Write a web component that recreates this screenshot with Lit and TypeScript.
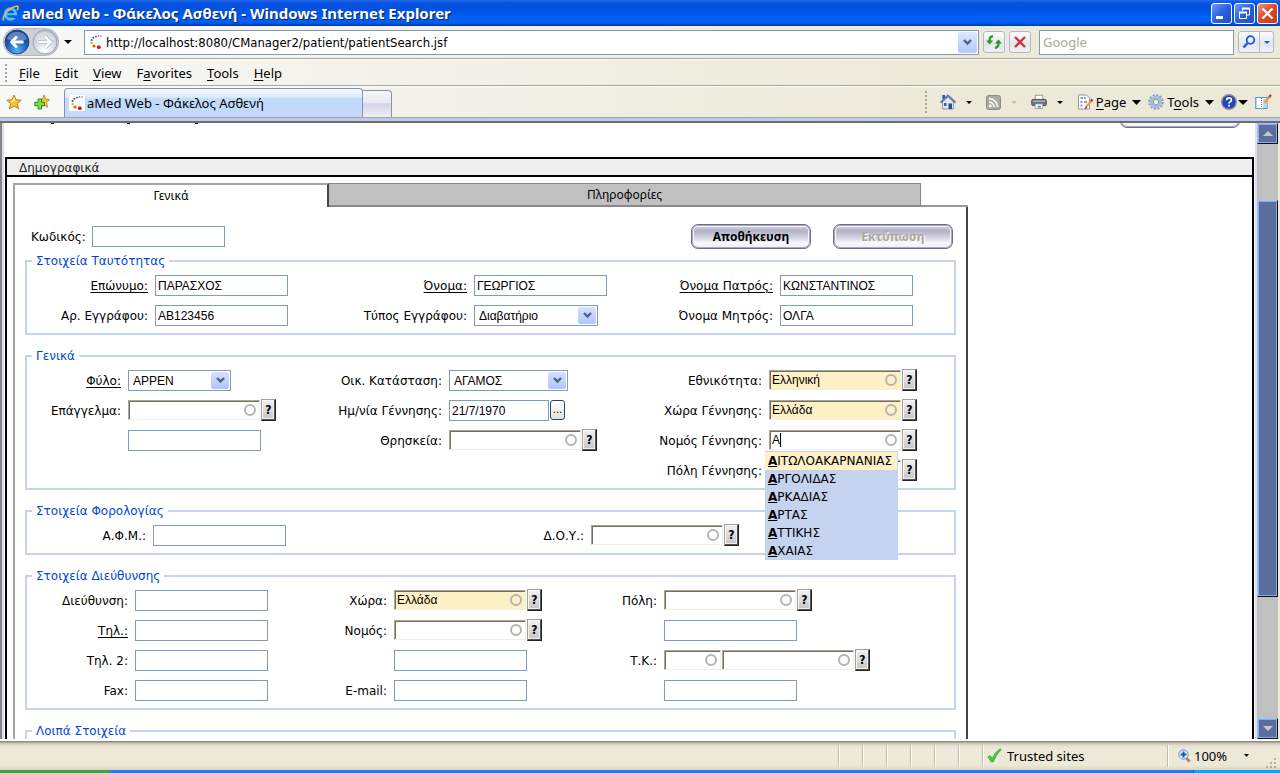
import { LitElement, html, css, svg, nothing, type TemplateResult } from "lit";
import { customElement, property } from "lit/decorators.js";
import { classMap } from "lit/directives/class-map.js";

const caretDown = (w: number, h: number, color = "#000") => html`
  <svg width=${w} height=${h} viewBox="0 0 10 5" preserveAspectRatio="none" aria-hidden="true">
    <path d="M0 0H10L5 5Z" fill=${color} />
  </svg>`;

const favicon = html`
  <svg width="16" height="16" viewBox="0 0 16 16" aria-hidden="true">
    <rect width="16" height="16" fill="#fff" />
    <circle cx="13" cy="2" r=".7" fill="#8a2a7a" /><circle cx="10.5" cy="2" r=".8" fill="#5a3aa0" />
    <circle cx="8" cy="2.6" r=".9" fill="#3a3ab0" /><circle cx="5.4" cy="3.8" r="1" fill="#2255a5" />
    <circle cx="3.6" cy="6" r="1.1" fill="#108060" /><circle cx="3.6" cy="9" r="1.3" fill="#e8b818" />
    <circle cx="6" cy="12" r="1.6" fill="#e06010" /><circle cx="10.8" cy="13.2" r="1.9" fill="#d01818" />
  </svg>`;

const ieLogo = html`
  <svg width="17" height="17" viewBox="0 0 17 17" aria-hidden="true">
    <circle cx="8.5" cy="9" r="5.2" fill="none" stroke="#4cc0f8" stroke-width="3" />
    <path d="M5 9.2H14" stroke="#4cc0f8" stroke-width="2.2" />
    <path d="M10 10.6H15V13H11Z" fill="#0055e0" />
    <path d="M1.6 15.5C-.5 11 9 1 15.5 1.2C16.6 2 16 4 15 5.2" fill="none" stroke="#f4c030" stroke-width="1.5" />
  </svg>`;

const travel = (dir: "back" | "forward") => html`
  <svg width="26" height="26" viewBox="0 0 26 26" aria-hidden="true">
    <defs>
      <radialGradient id="g-${dir}" cx=".5" cy=".85" r=".85">
        <stop offset="0" stop-color=${dir === "back" ? "#4fb4f4" : "#ffffff"} />
        <stop offset=".55" stop-color=${dir === "back" ? "#1c58b8" : "#d4dbe4"} />
        <stop offset="1" stop-color=${dir === "back" ? "#1a3f94" : "#b4becc"} />
      </radialGradient>
    </defs>
    <circle cx="13" cy="13" r="12" fill="url(#g-${dir})" stroke=${dir === "back" ? "#2a4a88" : "#98a3b2"} />
    <path d="M3 10A10.5 10.5 0 0 1 23 10C18 12 8 12 3 10Z" fill="#fff" opacity=".3" />
    <path d=${dir === "back" ? "M19.5 13H8M13 7.5L7.5 13L13 18.5" : "M6.5 13H18M13 7.5L18.5 13L13 18.5"}
      fill="none" stroke=${dir === "back" ? "#fff" : "#a8b2c0"} stroke-width=${dir === "back" ? 3 : 4} stroke-linejoin="round" />
    <path d=${dir === "back" ? "" : "M6.5 13H18M13 7.5L18.5 13L13 18.5"} fill="none" stroke="#fff" stroke-width="2.6" />
  </svg>`;

const refreshIcon = html`
  <svg width="18" height="18" viewBox="0 0 18 18" aria-hidden="true">
    <path d="M4.6 10V6.5Q4.6 3.5 8 3.2" fill="none" stroke="#2f9a1e" stroke-width="2.2" />
    <path d="M1 7.5H8.2L4.6 11.4Z" fill="#2f9a1e" />
    <path d="M13.4 8V11.5Q13.4 14.5 10 14.8" fill="none" stroke="#2f9a1e" stroke-width="2.2" />
    <path d="M9.8 10.4H17L13.4 6.4Z" fill="#2f9a1e" />
  </svg>`;

const stopIcon = html`
  <svg width="14" height="14" viewBox="0 0 14 14" aria-hidden="true">
    <path d="M2 2L12 12M12 2L2 12" stroke="#c83a3a" stroke-width="2.4" />
  </svg>`;

const magnifier = html`
  <svg width="14" height="14" viewBox="0 0 14 14" aria-hidden="true">
    <circle cx="8.5" cy="5" r="3.8" fill="#e8f0ff" stroke="#1c5ae0" stroke-width="1.8" />
    <path d="M5.8 7.8L1.5 12.5" stroke="#1c5ae0" stroke-width="2.4" />
  </svg>`;

const star = svg`<path d="M8 1L10 5.8L15.2 6.2L11.2 9.6L12.6 14.8L8 12L3.4 14.8L4.8 9.6L.8 6.2L6 5.8Z"
  fill="#fbc52c" stroke="#c77a12" />`;

const starIcon = html`<svg width="16" height="16" viewBox="0 0 16 16" aria-hidden="true">${star}
  <path d="M8 3L9.4 6.6L5 9Z" fill="#fff0a0" /></svg>`;

const addStarIcon = html`
  <svg width="16" height="16" viewBox="0 0 16 16" aria-hidden="true">
    <g transform="translate(4 0) scale(.76 .9)">${star}</g>
    <path d="M4 5H7.5V8.3H10.5V11.7H7.5V15H4V11.7H.8V8.3H4Z" fill="#7edc4e" stroke="#2c8a1c" />
  </svg>`;

const homeIcon = html`
  <svg width="16" height="16" viewBox="0 0 16 16" aria-hidden="true">
    <path d="M2.5 8V15H13.5V8L8 3Z" fill="#e4e6ee" stroke="#7a86a8" stroke-width=".8" />
    <path d="M2.5 1H5V5H2.5Z" fill="#2a48b8" />
    <path d="M.5 8.6L8 1.4L15.5 8.6" fill="none" stroke="#5878b0" stroke-width="1.8" />
    <path d="M8.5 9.5H12V15H8.5Z" fill="#1c4f9c" /><path d="M4 9H6.5V12H4Z" fill="#4a5a88" />
  </svg>`;

const feedIcon = html`
  <svg width="15" height="15" viewBox="0 0 15 15" aria-hidden="true">
    <rect x=".5" y=".5" width="14" height="14" rx="2" fill="#aaa9a2" stroke="#8d8c86" />
    <circle cx="4.2" cy="11" r="1.4" fill="#fff" />
    <path d="M3 7A5 5 0 0 1 8 12M3 3.6A8.6 8.6 0 0 1 11.6 12" fill="none" stroke="#fff" stroke-width="1.6" />
  </svg>`;

const printIcon = html`
  <svg width="16" height="16" viewBox="0 0 17 16" aria-hidden="true">
    <path d="M4.5 .8H12.5V6H4.5Z" fill="#fff" stroke="#777" stroke-width=".8" />
    <rect x=".6" y="5.2" width="15.8" height="6.6" rx="1.6" fill="#6e6e72" stroke="#48484c" stroke-width=".8" />
    <rect x="2" y="6.4" width="13" height="1.6" fill="#b0b0b4" />
    <path d="M4.5 10H12.5V15H4.5Z" fill="#fff" stroke="#888" stroke-width=".8" />
    <path d="M7 12H10.5V14H7Z" fill="#28a0a8" />
  </svg>`;

const pageIcon = html`
  <svg width="16" height="16" viewBox="0 0 16 16" aria-hidden="true">
    <path d="M1.5 1H9.5L12.5 4V15H1.5Z" fill="#fcfdff" stroke="#8e97ac" />
    <path d="M3.5 4H6M3.5 8H5.5M3.5 11.5H5.5M7 4H9M7 8H10" stroke="#6478a8" stroke-width="1.4" />
    <path d="M9 13L14.5 6.5" stroke="#e8a23c" stroke-width="2.4" /><path d="M14 7L15.4 5.4" stroke="#c02828" stroke-width="2.4" />
    <path d="M8 14.5L9.8 13" stroke="#444" stroke-width="1.2" />
  </svg>`;

const gearIcon = html`
  <svg width="16" height="16" viewBox="0 0 16 16" aria-hidden="true">
    <circle cx="8" cy="8" r="6.9" fill="none" stroke="#7f9fc0" stroke-width="1.8" stroke-dasharray="2.2 1.4" />
    <circle cx="8" cy="8" r="4.5" fill="none" stroke="#a4bdd8" stroke-width="3.4" />
    <circle cx="8" cy="8" r="2.7" fill="#f2f0e4" stroke="#7090b4" stroke-width=".8" />
  </svg>`;

const helpIcon = html`
  <svg width="16" height="16" viewBox="0 0 16 16" aria-hidden="true">
    <circle cx="8" cy="8" r="7.3" fill="#2346b0" stroke="#8f929e" stroke-width="1.4" />
    <path d="M5.6 6.2Q5.6 3.8 8 3.8T10.4 6Q10.4 7.2 9 7.9Q8 8.4 8 9.6" fill="none" stroke="#fff" stroke-width="1.7" />
    <rect x="7.1" y="10.8" width="1.8" height="1.8" fill="#fff" />
  </svg>`;

const notesIcon = html`
  <svg width="17" height="16" viewBox="0 0 17 16" aria-hidden="true">
    <path d="M.8 3.5H12V14.5H.8Z" fill="#fff" stroke="#4d9ad0" stroke-width="1.2" />
    <path d="M6.5 4V14" stroke="#666" stroke-dasharray="1 1" />
    <path d="M8 5H11.5V14H8Z" fill="#b8dcf0" />
    <path d="M9 9L14.8 2.4" stroke="#e8a23c" stroke-width="2.2" /><path d="M14 3.2L16 .9" stroke="#c04848" stroke-width="2.4" />
  </svg>`;

const checkIcon = html`
  <svg width="15" height="15" viewBox="0 0 15 15" aria-hidden="true">
    <path d="M.8 9L3 7.4L5.2 10.2Q8.4 3.6 13 .8L14.2 1.6Q9.4 6.4 6.2 14H4.4Z" fill="#4ccb3a" stroke="#2e9a28" stroke-width=".6" />
  </svg>`;

const zoomIcon = html`
  <svg width="13" height="14" viewBox="0 0 13 14" aria-hidden="true">
    <path d="M8 8.6L11.6 12.6" stroke="#b07a58" stroke-width="2.6" />
    <circle cx="5.5" cy="5.5" r="4.7" fill="#d8ecff" stroke="#7c93b4" />
    <path d="M5.5 2.6V8.4M2.6 5.5H8.4" stroke="#1456c8" stroke-width="1.9" />
  </svg>`;

/** Text box with an activity ring, a "?" look-up button and an optional suggestion list. */
@customElement("lookup-field")
class LookupField extends LitElement {
  @property() name = "";
  @property() value = "";
  @property() label = "";
  @property({ type: Boolean }) filled = false;
  @property({ type: Boolean }) short = false;
  @property({ type: Boolean }) bare = false;
  @property({ attribute: false }) suggestions: string[] = [];

  static styles = css`
    :host { display: flex; align-items: center; gap: 1px; height: 22px; position: relative; }
    .box { position: relative; flex: 0 1 132px; display: flex; min-width: 0; }
    .box.short { flex-basis: 57px; }
    input {
      box-sizing: border-box; width: 100%; height: 20px; margin: 0; padding: 0 20px 0 2px;
      border: 1px solid; border-color: #aca899 #f1efe2 #f1efe2 #aca899; box-shadow: inset 1px 1px 0 #716f64;
      background: #fff; color: #000; font: 12px/16px "Liberation Sans", Arial, sans-serif; outline: none;
    }
    .filled input { background: #fff1c6; }
    .ring {
      position: absolute; right: 4px; top: 4px; width: 12px; height: 12px; box-sizing: border-box;
      border: 2px solid #b4b4b4; border-radius: 50%;
    }
    .caret { position: absolute; left: 11px; top: 3px; width: 1px; height: 14px; background: #000; }
    button {
      box-sizing: border-box; flex: none; width: 15px; height: 22px; padding: 0; margin: 0;
      border: 1px solid; border-color: #a0a0a0 #222 #222 #a0a0a0;
      box-shadow: inset -1px -1px 0 #555, inset 1px 1px 0 #f8f8f4, inset -2px -2px 0 #f0efe6;
      background: linear-gradient(#f2f2f2, #c4c4c4); color: #000;
      font: bold 12px/18px "DejaVu Sans Condensed", "DejaVu Sans", sans-serif;
    }
    ul {
      position: absolute; z-index: 2; left: -4px; top: 22px; width: 133px; box-sizing: border-box;
      margin: 0; padding: 1px 1px 0 0; list-style: none; background: #c6d3ef;
      font: 12px/18px "DejaVu Sans", Verdana, sans-serif; white-space: nowrap;
    }
    li { padding-left: 3px; height: 18px; }
    li.active { background: #fff1c6; }
    b { text-decoration: underline; }
  `;

  render() {
    return html`
      <span class=${classMap({ box: true, filled: this.filled, short: this.short })}>
        <input type="text" name=${this.name} aria-label=${this.label} .value=${this.value} autocomplete="off" />
        <span class="ring"></span>
        ${this.suggestions.length ? html`<span class="caret"></span>` : nothing}
      </span>
      ${this.bare ? nothing : html`<button type="button" aria-label="${this.label} ?">?</button>`}
      ${this.suggestions.length
        ? html`<ul role="listbox">
            ${this.suggestions.map((s, i) => html`
              <li role="option" class=${classMap({ active: i === 0 })}><b>${s[0]}</b>${s.slice(1)}</li>`)}
          </ul>`
        : nothing}
    `;
  }
}

const prefectures = ["ΑΙΤΩΛΟΑΚΑΡΝΑΝΙΑΣ", "ΑΡΓΟΛΙΔΑΣ", "ΑΡΚΑΔΙΑΣ", "ΑΡΤΑΣ", "ΑΤΤΙΚΗΣ", "ΑΧΑΙΑΣ"];

@customElement("app-root")
class AppRoot extends LitElement {
  static styles = css`
    :host {
      display: flex; flex-direction: column; height: 100vh; overflow: hidden; color: #000;
      background: #ece9d8; font: 13px/16px "Noto Sans", Tahoma, sans-serif;
      --ui: "Noto Sans", Tahoma, sans-serif;
      --form: "DejaVu Sans", Verdana, sans-serif;
    }
    * { box-sizing: border-box; }
    svg { display: block; flex: none; }
    button, input, select { font: inherit; margin: 0; color: inherit; }
    u { text-underline-offset: 2px; }

    .titlebar {
      display: flex; align-items: center; flex: none; height: 26px; padding: 0 2px 0 2px;
      background: linear-gradient(#1c6cf0, #0a50dc 12%, #0054e3 40%, #0064fa 80%, #0050d8 92%, #0034a8);
      color: #fff;
    }
    .titlebar h1 {
      flex: 1; margin: 0 0 0 3px; font: bold 15px/20px var(--ui); white-space: nowrap;
      text-shadow: 1px 1px 1px #0a1f66;
    }
    .wincontrols { display: flex; gap: 2px; }
    .wincontrols button {
      width: 21px; height: 21px; padding: 0; display: grid; place-items: center; border: 1px solid #fff;
      border-radius: 3px; background: linear-gradient(135deg, #6f9bf8, #2a5fe0 50%, #1c4fd0);
    }
    .wincontrols .close { background: linear-gradient(135deg, #f09a80, #d94a28 50%, #c03a18); }

    .bar {
      display: flex; align-items: center; flex: none; border-bottom: 1px solid #a9a592;
      background: linear-gradient(90deg, #f8f8f8, #f3f2ea 30%, #ece9d8 75%);
    }
    .address { height: 33px; padding: 0 6px 0 4px; }
    .travel {
      display: flex; align-items: center; gap: 3px; padding: 0; border: 0;
    }
    .travel .pair { display: flex; gap: 2px; border-radius: 14px; background: #cdd0d4; box-shadow: 0 0 0 1px #b4b8be; }
    .ghost { padding: 0; border: 0; background: none; display: flex; align-items: center; }
    .drop { margin: 0 12px 0 3px; }
    .urlbox {
      flex: 1; display: flex; align-items: center; gap: 2px; height: 25px; min-width: 0; padding: 0 1px 0 3px;
      border: 1px solid #7f9db9; background: #fff;
    }
    .urlbox input {
      flex: 1; min-width: 0; height: 20px; padding: 0; border: 0; background: none; outline: none;
      font: 13px/18px "DejaVu Sans Condensed", "DejaVu Sans", sans-serif;
    }
    .arrowbox {
      width: 19px; height: 21px; padding: 0; display: grid; place-items: center; border: 0; border-radius: 2px;
      background: linear-gradient(#dce7ff, #b4c8f8);
    }
    .sq {
      display: grid; place-items: center; width: 22px; height: 22px; padding: 0; margin-left: 4px;
      border: 1px solid #b4b8c8; border-radius: 3px; background: linear-gradient(#fcfcfe, #e4e6ee 60%, #f0f0f4);
    }
    .search { width: 195px; height: 25px; margin-left: 8px; padding: 0 3px; border: 1px solid #7f9db9; background: #fff; }
    .search::placeholder { color: #aca899; opacity: 1; }
    .go { display: flex; margin-left: 4px; }
    .go .sq { margin: 0; }
    .go .sq:first-child { border-radius: 3px 0 0 3px; }
    .go .sq:last-child { width: 14px; border-left: 0; border-radius: 0 3px 3px 0; }

    .menu { height: 27px; padding-left: 5px; border-top: 1px solid #fff; gap: 12px; }
    .grip { width: 2px; height: 18px; background: repeating-linear-gradient(#a9a592 0 2px, transparent 2px 4px); }
    .menu nav { display: flex; gap: 15px; }
    .menu button { padding: 0; border: 0; background: none; }

    .tabs { height: 32px; padding: 0 8px 0 6px; border-top: 1px solid #fff; }
    .tabs .fav { display: flex; gap: 12px; margin-right: 14px; }
    .pagetab {
      display: flex; align-items: center; gap: 2px; width: 299px; height: 29px; padding: 0 0 0 4px; align-self: flex-end;
      border: 1px solid #8b8fa8; border-bottom: 0; border-radius: 4px 4px 0 0;
      background: linear-gradient(#f4f9ff, #dceafc 30%, #c2dcfa 32%, #c2d8fc);
    }
    .newtab {
      width: 29px; height: 27px; padding: 0; align-self: flex-end; border: 1px solid #8b8fa8; border-left: 0; border-bottom: 0;
      border-radius: 0 4px 0 0; background: linear-gradient(#f6f6fa, #e8e9f2 45%, #d0d4e6 50%, #eef0f6);
    }
    .tools { display: flex; align-items: center; gap: 7px; margin-left: auto; }
    .tools .grip { height: 22px; margin-right: 6px; }
    .tools .small { gap: 10px; margin-right: 7px; }
    .tools .menuish { gap: 6px; }
    .tools .tight { gap: 1px; }
    .tools .word { display: flex; gap: 3px; align-items: center; }
    .strip { flex: none; height: 5px; background: #b9cbf4; border-bottom: 2px solid #716f64; }

    .viewport { flex: 1; min-height: 0; display: flex; background: #fff; border-left: 2px solid #8a877b; }
    .page { flex: 1; min-width: 0; overflow: hidden; border: solid #d8def8; border-width: 0 2px; padding: 0 1px; }
    .above { display: flex; justify-content: space-between; align-items: flex-start; height: 34px; overflow: hidden; padding: 0 14px 0 44px; }
    .above .pill { margin-top: -20px; }

    .pill {
      width: 120px; height: 25px; padding: 0; border: 1px solid #6e6b8c; border-radius: 7px;
      background: linear-gradient(#dcdce8, #b0b0c8 25%, #d4d4e2 55%, #fafafc 80%, #e8e8f0);
      box-shadow: inset 0 0 0 1px #a9a8c0, inset 0 0 0 2px #f4f4fa; font: bold 12px/22px var(--ui);
    }
    .pill:disabled { color: #aca899; text-shadow: 1px 1px 0 #fff; }

    .section { border: 2px solid #000; }
    .section > h2 {
      margin: 0; height: 18px; padding-left: 12px; border-bottom: 2px solid #000; background: #eee;
      font: 12px/18px var(--form); color: #222;
    }
    .demographics { width: 955px; max-width: 100%; margin: 6px 0 0 6px; }
    .pagetabs { display: grid; grid-template-columns: 316fr 592fr 47fr; height: 24px; }
    .pagetabs button { padding: 0; border: 0; font: 12px/20px var(--ui); background: #fff; }
    .pagetabs .on { border: 2px solid #a4a4a4; border-width: 2px 2px 0 2px; border-right-color: #444; }
    .pagetabs .off { border: solid #888; border-width: 1px 1px 2px 0; background: #c0c0c0; }
    .pagetabs .rest { border-bottom: 2px solid #999; }
    .panel { padding: 17px 10px 40px; border: solid #a4a4a4; border-width: 0 2px; border-right-color: #444; }

    form { margin: 0; font: 12px/16px var(--form); }
    .top { display: flex; align-items: center; gap: 22px; padding: 0 3px 0 6px; height: 25px; margin-bottom: 5px; }
    .top .code { display: flex; align-items: center; gap: 6px; margin-right: auto; }
    fieldset { min-width: 0; margin: 0 0 14px; padding: 2px 0 3px; border: 2px solid #c6d3ef; }
    legend { margin-left: 5px; padding: 0 4px; line-height: 14px; color: #0046d5; }
    .grid { display: grid; grid-auto-rows: 30px; }
    .identity { grid-template-columns: 128fr 133fr 186fr 133fr 173fr 174fr; }
    .general { grid-template-columns: 101fr 150fr 171fr 150fr 170fr 185fr; }
    .tax { grid-template-columns: 126fr 133fr 305fr 363fr; }
    .home { grid-template-columns: 108fr 133fr 126fr 150fr 120fr 290fr; }
    .grid > label, .grid > .none { min-width: 0; padding: 8px 7px 0 0; text-align: right; white-space: nowrap; }
    label.req { text-decoration: underline; text-underline-offset: 2px; }
    .cell { display: flex; align-items: flex-start; gap: 1px; min-width: 0; padding-top: 5px; }
    .cell.look { padding-top: 4px; }
    .text {
      width: 133px; min-width: 0; height: 21px; padding: 0 2px; border: 1px solid #7f9db9; background: #fff;
      font: 12px/16px "Liberation Sans", Arial, sans-serif; outline: none;
    }
    .text.date { width: 100px; }
    .pick {
      width: 15px; height: 20px; padding: 0; border: 1px solid #1c4878; border-radius: 3px;
      background: linear-gradient(#fff, #e4e2d8); font: 10px/14px var(--form);
    }
    .select { position: relative; display: flex; }
    select {
      appearance: none; height: 21px; padding: 0 22px 0 4px; border: 1px solid #7f9db9; border-radius: 0; background: #fff;
      font: 12px/16px "Liberation Sans", Arial, sans-serif; outline: none;
    }
    select.sex { width: 103px; } select.doc { width: 124px; } select.marital { width: 119px; }
    .chev {
      position: absolute; right: 2px; top: 2px; width: 18px; height: 17px; display: grid; place-items: center;
      pointer-events: none; border-radius: 2px; background: linear-gradient(#d4e0ff, #b0c6f8);
    }

    .scroll { flex: none; width: 23px; display: flex; flex-direction: column; padding-right: 2px; background: #ece9d8; }
    .scroll button, .thumb {
      padding: 0; border: 1px solid; border-color: #a9c0f8 #111 #111 #a9c0f8; background: #5b6f9f;
      box-shadow: inset -1px -1px 0 #8fa8e8, inset 1px 1px 0 #8fa8e8;
    }
    .scroll button { height: 21px; display: grid; place-items: center; }
    .track { flex: 1; display: grid; grid-template-rows: 56fr 397fr 121fr; background: #c0c0c0; }
    .thumb { grid-row: 2; }

    .status {
      display: flex; align-items: center; flex: none; height: 31px; border-top: 2px solid #fff; padding: 0 2px 0 0;
      background: linear-gradient(#8f8c80 1px, #c8c5b6 2px, #e6e3d4 5px, #ece9d8 8px, #ece9d8 24px, #dad6c2);
    }
    .cells { display: flex; margin-left: auto; }
    .cells span { width: 24px; }
    .cells span, .zone, .zoom { height: 22px; border-left: 1px solid #c0bca8; box-shadow: inset 1px 0 0 #fff; }
    .zone { display: flex; align-items: center; gap: 5px; width: 185px; padding-left: 4px; }
    .zoom { display: flex; align-items: center; width: 99px; padding-left: 10px; }
    .zoom button { gap: 3px; }
    .zoom .arr { margin-left: 17px; }
    .size { align-self: flex-end; width: 12px; height: 12px; }
    .taskbar { display: grid; grid-template-columns: 110px 1fr 87px; flex: none; height: 3px; background: #2f7ae8; }
    .taskbar .start { background: #4a9a48; border-radius: 0 3px 0 0; }
    .taskbar .tray { grid-column: 3; background: #18a0f0; border-left: 1px solid #0a4a98; }
  `;

  private label(text: string, id: string, req = false) {
    return html`<label for=${id} class=${classMap({ req })}>${text}</label>`;
  }

  private text(text: string, id: string, value = "", req = false) {
    return html`
      ${text ? this.label(text, id, req) : html`<span class="none"></span>`}
      <span class="cell"><input class="text" id=${id} type="text" aria-label=${text || id} .value=${value} /></span>`;
  }

  private select(text: string, id: string, value: string, req = false) {
    return html`${this.label(text, id, req)}
      <span class="cell"><span class="select">
        <select id=${id} class=${id}><option>${value}</option></select>
        <span class="chev"><svg width="9" height="7" viewBox="0 0 9 7"><path d="M1 1L4.5 4.5L8 1" fill="none" stroke="#4d6185" stroke-width="2.4" /></svg></span>
      </span></span>`;
  }

  private lookup(text: string, id: string, value = "", suggestions: string[] = []) {
    return html`${this.label(text, id)}
      <span class="cell look"><lookup-field id=${id} name=${id} label=${text} .value=${value}
        ?filled=${value.length > 1} .suggestions=${suggestions}></lookup-field></span>`;
  }

  private blank() {
    return html`<span></span><span></span>`;
  }

  private group(title: string, cls: string, body: TemplateResult) {
    return html`<fieldset><legend>${title}</legend><div class="grid ${cls}">${body}</div></fieldset>`;
  }

  private chrome() {
    return html`
      <header class="titlebar">
        ${ieLogo}
        <h1>aMed Web - Φάκελος Ασθενή - Windows Internet Explorer</h1>
        <div class="wincontrols">
          <button aria-label="Minimize"><svg width="13" height="13"><rect x="1" y="9" width="7" height="3" fill="#fff" /></svg></button>
          <button aria-label="Restore"><svg width="13" height="13"><path d="M4.5 4V1.5H11.5V8H9" fill="none" stroke="#fff" /><path d="M4 1.5H12" stroke="#fff" stroke-width="2" /><path d="M1.5 5.5H8.5V11.5H1.5Z" fill="none" stroke="#fff" /><path d="M1 5.5H9" stroke="#fff" stroke-width="2" /></svg></button>
          <button class="close" aria-label="Close"><svg width="13" height="13"><path d="M1.5 1.5L11.5 11.5M11.5 1.5L1.5 11.5" stroke="#fff" stroke-width="2.2" /></svg></button>
        </div>
      </header>
      <div class="bar address">
        <div class="travel">
          <span class="pair">
            <button class="ghost" aria-label="Back">${travel("back")}</button>
            <button class="ghost" aria-label="Forward">${travel("forward")}</button>
          </span>
          <button class="ghost drop" aria-label="Recent pages">${caretDown(8, 4)}</button>
        </div>
        <div class="urlbox">
          ${favicon}
          <input type="text" aria-label="Address" .value=${"http://localhost:8080/CManager2/patient/patientSearch.jsf"} />
          <button class="arrowbox" aria-label="Show addresses"><svg width="9" height="7" viewBox="0 0 9 7"><path d="M1 1L4.5 4.5L8 1" fill="none" stroke="#4d6185" stroke-width="2.4" /></svg></button>
        </div>
        <button class="sq" aria-label="Refresh">${refreshIcon}</button>
        <button class="sq" aria-label="Stop">${stopIcon}</button>
        <input class="search" type="text" aria-label="Search" placeholder="Google" />
        <span class="go">
          <button class="sq" aria-label="Go">${magnifier}</button>
          <button class="sq" aria-label="Search options">${caretDown(6, 3, "#1c5ae0")}</button>
        </span>
      </div>
      <div class="bar menu">
        <span class="grip"></span>
        <nav>
          <button><u>F</u>ile</button><button><u>E</u>dit</button><button><u>V</u>iew</button>
          <button>F<u>a</u>vorites</button><button><u>T</u>ools</button><button><u>H</u>elp</button>
        </nav>
      </div>
      <div class="bar tabs">
        <span class="fav">
          <button class="ghost" aria-label="Favorites Center">${starIcon}</button>
          <button class="ghost" aria-label="Add to Favorites">${addStarIcon}</button>
        </span>
        <button class="pagetab">${favicon}<span>aMed Web - Φάκελος Ασθενή</span></button>
        <button class="newtab" aria-label="New Tab"></button>
        <div class="tools">
          <span class="grip"></span>
          <button class="ghost small" aria-label="Home">${homeIcon}${caretDown(6, 3)}</button>
          <button class="ghost small" aria-label="Feeds">${feedIcon}${caretDown(6, 3, "#c4c1b0")}</button>
          <button class="ghost small" aria-label="Print">${printIcon}${caretDown(6, 3)}</button>
          <button class="ghost menuish"><span class="word">${pageIcon}<span><u>P</u>age</span></span>${caretDown(9, 5)}</button>
          <button class="ghost menuish"><span class="word">${gearIcon}<span>T<u>o</u>ols</span></span>${caretDown(9, 5)}</button>
          <button class="ghost tight" aria-label="Help">${helpIcon}${caretDown(10, 5)}</button>
          <button class="ghost" aria-label="Notes">${notesIcon}</button>
        </div>
      </div>
      <div class="strip"></div>`;
  }

  private patientForm() {
    return html`
      <form class="panel" @submit=${(e: Event) => e.preventDefault()}>
        <div class="top">
          <span class="code"><label for="code">Κωδικός:</label><input class="text" id="code" type="text" /></span>
          <button class="pill" type="button">Αποθήκευση</button>
          <button class="pill" type="button" disabled>Εκτύπωση</button>
        </div>
        ${this.group("Στοιχεία Ταυτότητας", "identity", html`
          ${this.text("Επώνυμο:", "surname", "ΠΑΡΑΣΧΟΣ", true)}
          ${this.text("Όνομα:", "name", "ΓΕΩΡΓΙΟΣ", true)}
          ${this.text("Όνομα Πατρός:", "father", "ΚΩΝΣΤΑΝΤΙΝΟΣ", true)}
          ${this.text("Αρ. Εγγράφου:", "docno", "AB123456")}
          ${this.select("Τύπος Εγγράφου:", "doc", "Διαβατήριο")}
          ${this.text("Όνομα Μητρός:", "mother", "ΟΛΓΑ")}`)}
        ${this.group("Γενικά", "general", html`
          ${this.select("Φύλο:", "sex", "ΑΡΡΕΝ", true)}
          ${this.select("Οικ. Κατάσταση:", "marital", "ΑΓΑΜΟΣ")}
          ${this.lookup("Εθνικότητα:", "nationality", "Ελληνική")}
          ${this.lookup("Επάγγελμα:", "profession")}
          ${this.label("Ημ/νία Γέννησης:", "birth")}
          <span class="cell">
            <input class="text date" id="birth" type="text" .value=${"21/7/1970"} />
            <button class="pick" type="button">...</button>
          </span>
          ${this.lookup("Χώρα Γέννησης:", "birthcountry", "Ελλάδα")}
          ${this.text("", "profession-note")}
          ${this.lookup("Θρησκεία:", "religion")}
          ${this.lookup("Νομός Γέννησης:", "birthregion", "Α", prefectures)}
          ${this.blank()}${this.blank()}
          ${this.lookup("Πόλη Γέννησης:", "birthcity")}`)}
        ${this.group("Στοιχεία Φορολογίας", "tax", html`
          ${this.text("Α.Φ.Μ.:", "vat")}
          ${this.lookup("Δ.Ο.Υ.:", "taxoffice")}`)}
        ${this.group("Στοιχεία Διεύθυνσης", "home", html`
          ${this.text("Διεύθυνση:", "street")}
          ${this.lookup("Χώρα:", "country", "Ελλάδα")}
          ${this.lookup("Πόλη:", "city")}
          ${this.text("Τηλ.:", "phone", "", true)}
          ${this.lookup("Νομός:", "region")}
          ${this.text("", "city-note")}
          ${this.text("Τηλ. 2:", "phone2")}
          ${this.text("", "region-note")}
          ${this.label("Τ.Κ.:", "zip")}
          <span class="cell look">
            <lookup-field id="zip" name="zip" label="Τ.Κ.:" short bare></lookup-field>
            <lookup-field name="ziparea" label="Τ.Κ.:"></lookup-field>
          </span>
          ${this.text("Fax:", "fax")}
          ${this.text("E-mail:", "email")}
          ${this.text("", "zip-note")}`)}
        ${this.group("Λοιπά Στοιχεία", "home", this.blank())}
      </form>`;
  }

  render() {
    return html`
      ${this.chrome()}
      <main class="viewport">
        <div class="page">
          <div class="above">
            <svg width="160" height="1" viewBox="0 0 160 1" aria-hidden="true"><path d="M2 .5H5M78 .5H81M146 .5H149" stroke="#000" /></svg>
            <button class="pill" type="button" aria-label="Επιστροφή"></button>
          </div>
          <section class="section">
            <h2>Δημογραφικά</h2>
            <div class="demographics">
              <div class="pagetabs">
                <button class="on" type="button">Γενικά</button>
                <button class="off" type="button">Πληροφορίες</button>
                <span class="rest"></span>
              </div>
              ${this.patientForm()}
            </div>
          </section>
        </div>
        <div class="scroll">
          <button type="button" aria-label="Scroll up"><svg width="10" height="5"><path d="M0 5L5 0L10 5Z" fill="#c8c8c8" /></svg></button>
          <div class="track"><div class="thumb"></div></div>
          <button type="button" aria-label="Scroll down">${caretDown(10, 5, "#c8c8c8")}</button>
        </div>
      </main>
      <footer class="status">
        <div class="cells">${[1, 2, 3, 4, 5, 6].map(() => html`<span></span>`)}</div>
        <div class="zone">${checkIcon}<span>Trusted sites</span></div>
        <div class="zoom">
          <button class="ghost">${zoomIcon}<span>100%</span></button>
          <button class="ghost arr" aria-label="Change zoom level">${caretDown(5, 3)}</button>
        </div>
        <svg class="size" width="12" height="12" viewBox="0 0 12 12" fill="#b4b09c" aria-hidden="true">
          <path d="M8 0H10V2H8ZM8 4H10V6H8ZM8 8H10V10H8ZM4 4H6V6H4ZM4 8H6V10H4ZM0 8H2V10H0Z" />
        </svg>
      </footer>
      <div class="taskbar"><span class="start"></span><span class="tray"></span></div>
    `;
  }
}
